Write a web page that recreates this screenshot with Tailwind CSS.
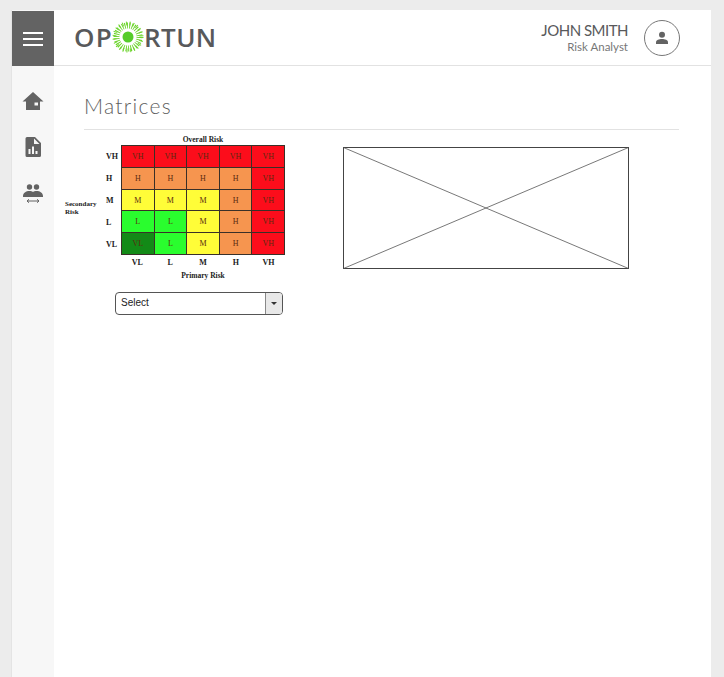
<!DOCTYPE html>
<html lang="en">
<head>
    <meta charset="UTF-8">
    <meta name="viewport" content="width=device-width, initial-scale=1.0">
    <title>Matrices</title>
    <script src="https://cdn.jsdelivr.net/npm/@tailwindcss/browser@4"></script>
</head>
<body class="bg-[#ececec] h-[677px] overflow-hidden font-['Lato',sans-serif]">
    <div class="ml-[11px] mr-[13px] mt-[10px] h-[667px] flex border-l border-[#e4e4e4] bg-white">
        <!-- sidebar -->
        <aside class="w-[42px] shrink-0 bg-[#f7f7f7] flex flex-col items-center">
            <button class="w-full h-[55px] mt-px bg-[#636363] flex flex-col items-center justify-center gap-[4px]">
                <span class="block w-[20px] h-[2px] bg-white"></span>
                <span class="block w-[20px] h-[2px] bg-white"></span>
                <span class="block w-[20px] h-[2px] bg-white"></span>
            </button>
            <svg class="w-[24px] h-[24px] mt-[23px] fill-[#636363]" viewBox="0 0 24 24"><path d="M12 3 1.500 12.500H5V21h14v-8.500h3.500L12 3Zm1.500 10.500h3.500v3h-3.500v-3Z" fill-rule="evenodd"/></svg>
            <svg class="w-[22px] h-[22px] mt-[23px] fill-[#636363]" viewBox="0 0 22 22"><path d="M5 1h8l6 6v12.500a1.500 1.500 0 0 1-1.500 1.500h-12.500A1.500 1.500 0 0 1 3.500 19.500v-17A1.500 1.500 0 0 1 5 1Zm7 1.500V8h5.500L12 2.500ZM6.500 13v5h2v-5h-2Zm3.500-2.500V18h2v-7.500h-2Zm3.500 4.500v3h2v-3h-2Z" fill-rule="evenodd"/></svg>
            <svg class="w-[22px] h-[22px] mt-[25px] fill-[#636363]" viewBox="0 0 22 22">
                <circle cx="7.500" cy="4" r="2.700"/><circle cx="14.500" cy="4" r="2.700"/>
                <path d="M1 13c0-3 3-5 6.500-5 1.500 0 2.600.4 3.500 1 .9-.6 2-1 3.500-1 3.500 0 6.500 2 6.500 5v1H1v-1Z"/>
                <path d="M5 18h12M5 18l2-1.700M5 18l2 1.700M17 18l-2-1.700M17 18l-2 1.700" fill="none" stroke="#636363" stroke-width="1"/>
            </svg>
        </aside>

        <div class="flex-1 flex flex-col min-w-0 bg-white">
            <!-- header -->
            <header class="h-[56px] shrink-0 border-b border-[#e2e2e2] flex items-center pl-[20px] pr-[31px]">
                <div class="flex items-center text-[#58595b] text-[26px] font-semibold leading-none font-['Open_Sans',sans-serif] h-[30px] mt-[-2px]">
                    <span class="tracking-[1.300px]">OP</span>
                    <svg class="w-[32px] h-[32px] mx-[-1px]" viewBox="0 0 32 32">
                        <circle cx="16" cy="16" r="11.500" fill="none" stroke="#6cd42c" stroke-width="6" stroke-dasharray="1 1.400"/>
                        <circle cx="16" cy="16" r="13.500" fill="none" stroke="#6cd42c" stroke-width="4" stroke-dasharray="0.900 2.700"/>
                        <circle cx="16" cy="16" r="8" fill="white"/>
                        <circle cx="16" cy="16" r="5.500" fill="#55cc2a"/>
                    </svg>
                    <span class="tracking-[0.400px] ml-px">RTUN</span>
                </div>
                <div class="ml-auto text-right mr-[16px] mt-[-1px]">
                    <div class="text-[15px] leading-[20px] text-[#58595b] tracking-[-0.5px]">JOHN SMITH</div>
                    <div class="text-[11.500px] leading-[14px] text-[#777777]">Risk Analyst</div>
                </div>
                <div class="w-[36px] h-[36px] rounded-full border border-[#777777] flex items-center justify-center">
                    <svg class="w-[14px] h-[14px] fill-[#636363]" viewBox="0 0 14 14"><circle cx="7" cy="3.800" r="3"/><path d="M1 13v-1.800C1 9.200 4 8 7 8s6 1.200 6 3.200V13H1Z"/></svg>
                </div>
            </header>

            <!-- page -->
            <main class="flex-1 pl-[30px] pr-[32px] bg-white">
                <h1 class="text-[21px] font-light leading-[30px] pt-[25px] h-[64px] text-[#5f5f5f] tracking-[1.300px] border-b border-[#e2e2e2]">Matrices</h1>
                <div class="flex ml-[-19px] pt-[5px]">
                    <div class="w-[220px]">
                        <div class="grid grid-cols-[40px_16px_repeat(5,32.800px)] grid-rows-[10px_repeat(5,22px)_15px_12px] font-['Liberation_Serif',serif] font-bold text-[8px] text-[#222222] items-center">
                            <div class="col-start-3 col-span-5 text-center leading-[10px] text-[7.500px]">Overall Risk</div>

                            <div class="row-start-2 col-start-2 pt-[2px] pl-px">VH</div>
                            <div class="row-start-3 col-start-2 pt-[2px] pl-px">H</div>
                            <div class="row-start-4 col-start-2 pt-[2px] pl-px">M</div>
                            <div class="row-start-5 col-start-2 pt-[2px] pl-px">L</div>
                            <div class="row-start-6 col-start-2 pt-[2px] pl-px">VL</div>
                            <div class="row-start-4 row-span-2 col-start-1 self-start mt-[11px] leading-[8px] text-[7px]">Secondary<br>Risk</div>

                            <div class="row-start-2 row-span-5 col-start-3 col-span-5 h-[110px] grid grid-cols-5 grid-rows-5 gap-px p-px bg-[#3a3028] font-normal text-[8px] text-[#5a2a10] text-center leading-[22px]">
                                <div class="bg-[#fc0d1b]">VH</div>
                                <div class="bg-[#fc0d1b]">VH</div>
                                <div class="bg-[#fc0d1b]">VH</div>
                                <div class="bg-[#fc0d1b]">VH</div>
                                <div class="bg-[#fc0d1b]">VH</div>
                                <div class="bg-[#f6954f]">H</div>
                                <div class="bg-[#f6954f]">H</div>
                                <div class="bg-[#f6954f]">H</div>
                                <div class="bg-[#f6954f]">H</div>
                                <div class="bg-[#fc0d1b]">VH</div>
                                <div class="bg-[#fffd38]">M</div>
                                <div class="bg-[#fffd38]">M</div>
                                <div class="bg-[#fffd38]">M</div>
                                <div class="bg-[#f6954f]">H</div>
                                <div class="bg-[#fc0d1b]">VH</div>
                                <div class="bg-[#2afd2e]">L</div>
                                <div class="bg-[#2afd2e]">L</div>
                                <div class="bg-[#fffd38]">M</div>
                                <div class="bg-[#f6954f]">H</div>
                                <div class="bg-[#fc0d1b]">VH</div>
                                <div class="bg-[#138a17]">VL</div>
                                <div class="bg-[#2afd2e]">L</div>
                                <div class="bg-[#fffd38]">M</div>
                                <div class="bg-[#f6954f]">H</div>
                                <div class="bg-[#fc0d1b]">VH</div>
                            </div>

                            <div class="row-start-7 col-start-3 text-center">VL</div>
                            <div class="row-start-7 col-start-4 text-center">L</div>
                            <div class="row-start-7 col-start-5 text-center">M</div>
                            <div class="row-start-7 col-start-6 text-center">H</div>
                            <div class="row-start-7 col-start-7 text-center">VH</div>
                            <div class="row-start-8 col-start-3 col-span-5 text-center text-[7.500px]">Primary Risk</div>
                        </div>
                        <div class="ml-[50px] mt-[10px] w-[168px] h-[23px] flex border border-[#555555] rounded-[4px] overflow-hidden font-['Liberation_Sans',sans-serif] text-[10px] text-[#222222]">
                            <div class="flex-1 pl-[5px] leading-[19px]">Select</div>
                            <div class="w-[17px] border-l border-[#888888] bg-[#e8e8e8] flex items-center justify-center">
                                <span class="block w-0 h-0 border-x-[3px] border-x-transparent border-t-[3px] border-t-[#333333]"></span>
                            </div>
                        </div>
                    </div>
                    <svg class="ml-[58px] mt-[12px] w-[286px] h-[122px]" viewBox="0 0 286 122">
                        <rect x="0.500" y="0.500" width="285" height="121" fill="white" stroke="#444444"/>
                        <path d="M0.500 0.500 285.500 121.500M285.500 0.500 0.500 121.500" stroke="#555555" stroke-width="0.800" fill="none"/>
                    </svg>
                </div>
            </main>
        </div>
    </div>
</body>
</html>
